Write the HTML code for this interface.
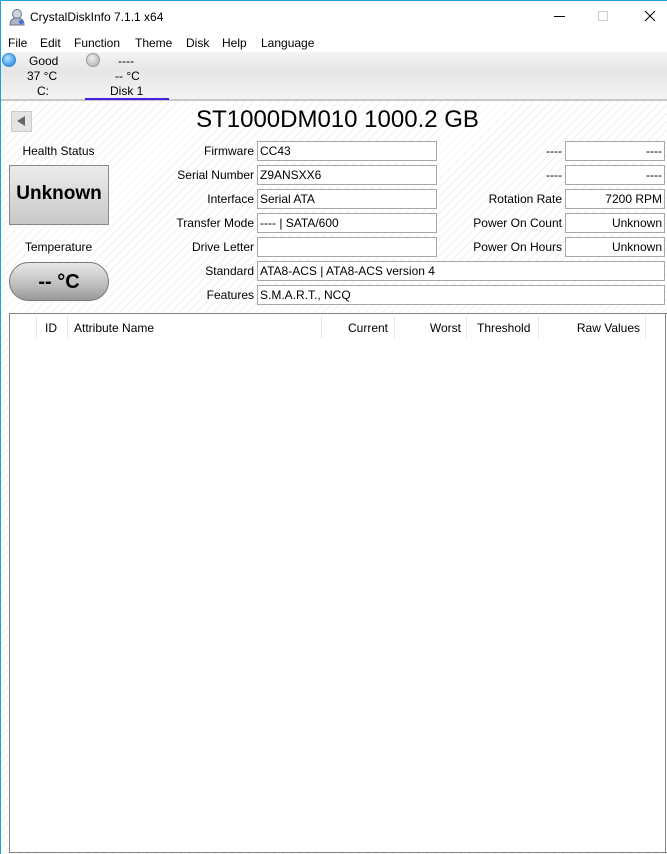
<!DOCTYPE html>
<html><head><meta charset="utf-8"><style>
*{margin:0;padding:0;box-sizing:border-box}
body{width:667px;height:854px;position:relative;overflow:hidden;font-family:"Liberation Sans",sans-serif;font-size:12px;color:#000;
background:#fff repeating-linear-gradient(135deg,#fff 0 5px,#f1f1f1 5px 6px);}
.a{position:absolute}
.lbl{position:absolute;text-align:right;white-space:nowrap}
.in{position:absolute;height:20px;border:1px solid #a8a8a8;background:#fff;padding:2px 2px;white-space:nowrap;line-height:14px}
.r{text-align:right}
</style></head><body>
<div class="a" style="left:0;top:0;width:667px;height:100px;background:#fff"></div>
<div class="a" style="left:0;top:0;width:1px;height:854px;background:#1ba1d6"></div>
<div class="a" style="left:0;top:0;width:667px;height:1px;background:#1ba1d6"></div>
<svg class="a" style="left:8px;top:8px" width="18" height="18"><circle cx="9" cy="6" r="4.5" fill="#cbd3de" stroke="#6b7689"/><path d="M2 17 Q2 10 9 10 Q16 10 16 17Z" fill="#aab4c4" stroke="#6b7689"/><circle cx="13" cy="14" r="2" fill="#3a6fe0"/></svg>
<div class="a" style="left:30px;top:10px">CrystalDiskInfo 7.1.1 x64</div>
<div class="a" style="left:554px;top:16px;width:11px;height:1px;background:#000"></div>
<div class="a" style="left:598px;top:11px;width:10px;height:10px;border:1px solid #ccc"></div>
<svg class="a" style="left:644px;top:10px" width="12" height="12"><path d="M1 1L11 11M11 1L1 11" stroke="#000" stroke-width="1"/></svg>
<div class="a" style="left:8px;top:36px">File</div>
<div class="a" style="left:40px;top:36px">Edit</div>
<div class="a" style="left:74px;top:36px">Function</div>
<div class="a" style="left:135px;top:36px">Theme</div>
<div class="a" style="left:186px;top:36px">Disk</div>
<div class="a" style="left:222px;top:36px">Help</div>
<div class="a" style="left:261px;top:36px">Language</div>
<div class="a" style="left:1px;top:52px;width:666px;height:47px;background:linear-gradient(#f4f4f4,#e6e6e6 40%,#f3f3f3)"></div>
<div class="a" style="left:1px;top:99px;width:666px;height:2px;background:#c8c8c8"></div>
<div class="a" style="left:85px;top:98px;width:84px;height:2px;background:#4b1ee6"></div>
<div class="a" style="left:2px;top:53px;width:14px;height:14px;border-radius:50%;background:radial-gradient(circle at 40% 35%,#b8e2ff,#3d9af0 70%);border:1px solid #3d86d0"></div>
<div class="a" style="left:86px;top:53px;width:14px;height:14px;border-radius:50%;background:radial-gradient(circle at 40% 35%,#eee,#aaa);border:1px solid #999"></div>
<div class="a" style="left:29px;top:54px">Good</div>
<div class="a" style="left:27px;top:69px">37 °C</div>
<div class="a" style="left:37px;top:84px">C:</div>
<div class="a" style="left:118px;top:54px">----</div>
<div class="a" style="left:115px;top:69px">-- °C</div>
<div class="a" style="left:110px;top:84px">Disk 1</div>
<div class="a" style="left:11px;top:111px;width:21px;height:21px;border:1px solid #ccc;background:#e4e4e4"></div>
<svg class="a" style="left:15px;top:115px" width="12" height="12"><path d="M10 1L2 6L10 11Z" fill="#666"/></svg>
<div class="a" style="left:0;width:667px;top:106px;text-align:center;font-size:24px;padding-left:8px">ST1000DM010 1000.2 GB</div>
<div class="a" style="left:0;width:117px;top:144px;text-align:center">Health Status</div>
<div class="a" style="left:9px;top:165px;width:100px;height:60px;border:1px solid #888;background:linear-gradient(#ececec,#c8c8c8);font-weight:bold;font-size:19px;text-align:center;line-height:56px">Unknown</div>
<div class="a" style="left:0;width:117px;top:240px;text-align:center">Temperature</div>
<div class="a" style="left:9px;top:262px;width:100px;height:39px;border:1px solid #777;border-radius:20px;background:linear-gradient(#e8e8e8,#bdbdbd 60%,#999);font-weight:bold;font-size:20px;text-align:center;line-height:38px">-- °C</div>
<div class="lbl" style="right:413px;top:144px">Firmware</div>
<div class="lbl" style="right:413px;top:168px">Serial Number</div>
<div class="lbl" style="right:413px;top:192px">Interface</div>
<div class="lbl" style="right:413px;top:216px">Transfer Mode</div>
<div class="lbl" style="right:413px;top:240px">Drive Letter</div>
<div class="lbl" style="right:413px;top:264px">Standard</div>
<div class="lbl" style="right:413px;top:288px">Features</div>
<div class="in" style="left:257px;top:141px;width:180px">CC43</div>
<div class="in" style="left:257px;top:165px;width:180px">Z9ANSXX6</div>
<div class="in" style="left:257px;top:189px;width:180px">Serial ATA</div>
<div class="in" style="left:257px;top:213px;width:180px">---- | SATA/600</div>
<div class="in" style="left:257px;top:237px;width:180px"></div>
<div class="in" style="left:257px;top:261px;width:408px">ATA8-ACS | ATA8-ACS version 4</div>
<div class="in" style="left:257px;top:285px;width:408px">S.M.A.R.T., NCQ</div>
<div class="lbl" style="right:105px;top:144px">----</div>
<div class="lbl" style="right:105px;top:168px">----</div>
<div class="lbl" style="right:105px;top:192px">Rotation Rate</div>
<div class="lbl" style="right:105px;top:216px">Power On Count</div>
<div class="lbl" style="right:105px;top:240px">Power On Hours</div>
<div class="in r" style="left:565px;top:141px;width:100px">----</div>
<div class="in r" style="left:565px;top:165px;width:100px">----</div>
<div class="in r" style="left:565px;top:189px;width:100px">7200 RPM</div>
<div class="in r" style="left:565px;top:213px;width:100px">Unknown</div>
<div class="in r" style="left:565px;top:237px;width:100px">Unknown</div>
<div class="a" style="left:9px;top:313px;width:658px;height:540px;border:1px solid #828282;border-right:none;background:#fff"></div>
<div class="a" style="left:665px;top:313px;width:1px;height:540px;background:#828282"></div>
<div class="a" style="left:36px;top:316px;width:1px;height:22px;background:#e5e5e5"></div>
<div class="a" style="left:67px;top:316px;width:1px;height:22px;background:#e5e5e5"></div>
<div class="a" style="left:321px;top:316px;width:1px;height:22px;background:#e5e5e5"></div>
<div class="a" style="left:394px;top:316px;width:1px;height:22px;background:#e5e5e5"></div>
<div class="a" style="left:466px;top:316px;width:1px;height:22px;background:#e5e5e5"></div>
<div class="a" style="left:538px;top:316px;width:1px;height:22px;background:#e5e5e5"></div>
<div class="a" style="left:645px;top:316px;width:1px;height:22px;background:#e5e5e5"></div>
<div class="a" style="left:45px;top:321px">ID</div>
<div class="a" style="left:74px;top:321px">Attribute Name</div>
<div class="lbl" style="right:279px;top:321px">Current</div>
<div class="lbl" style="right:206px;top:321px">Worst</div>
<div class="a" style="left:477px;top:321px">Threshold</div>
<div class="lbl" style="right:27px;top:321px">Raw Values</div>
</body></html>
